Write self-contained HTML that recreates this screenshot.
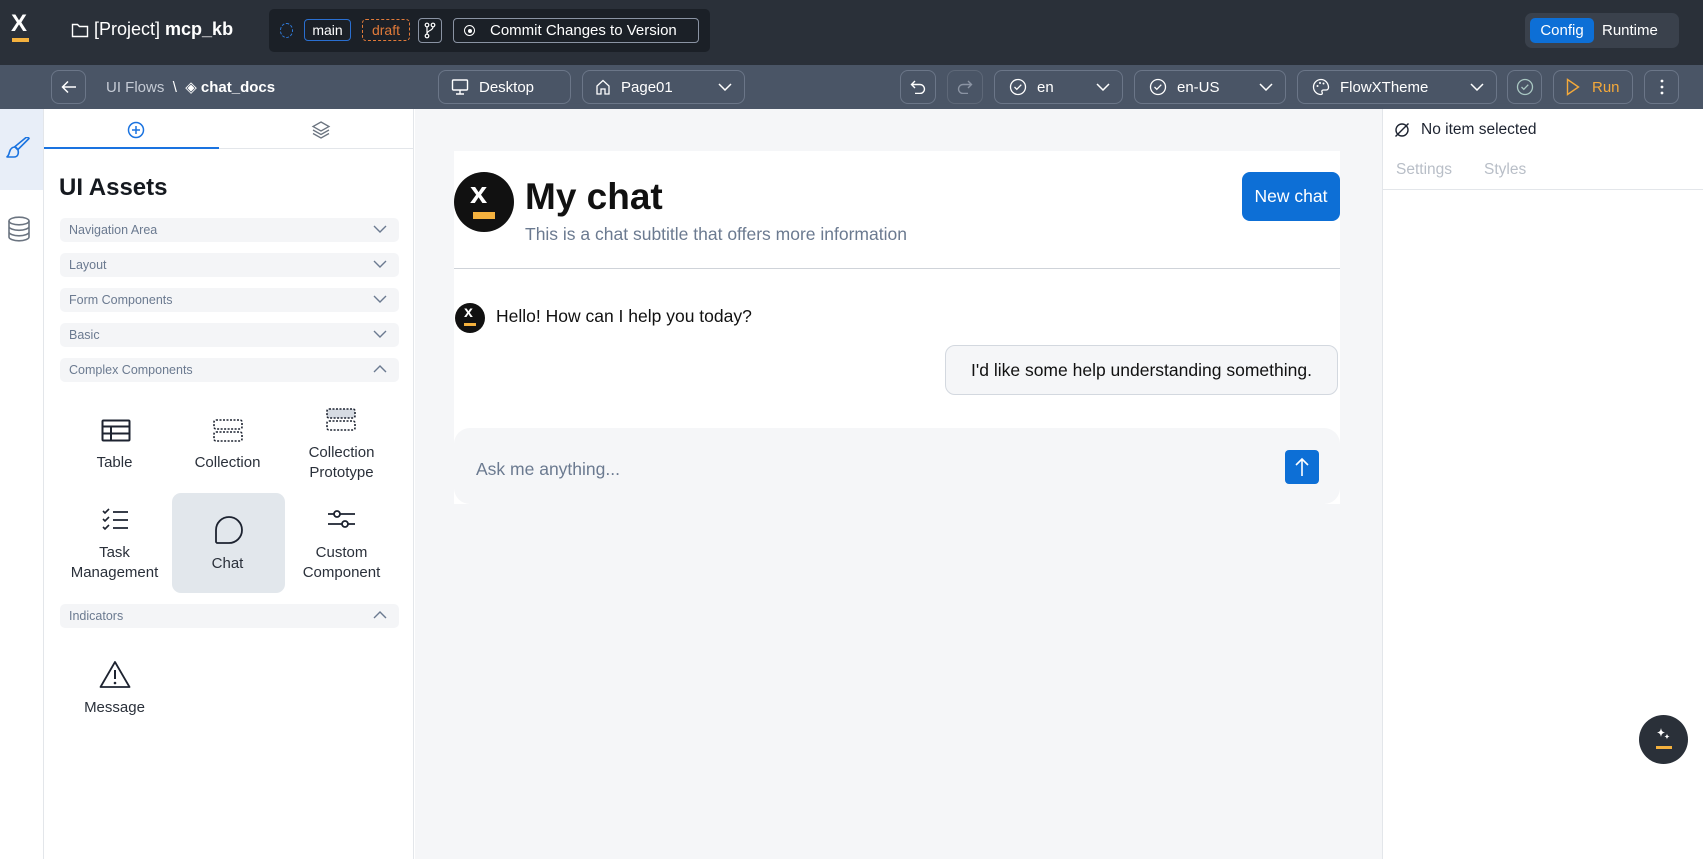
<!DOCTYPE html>
<html><head><meta charset="utf-8"><style>
*{box-sizing:border-box;margin:0;padding:0}
body{width:1703px;height:859px;overflow:hidden;font-family:"Liberation Sans",sans-serif;background:#fff;position:relative;color:#1d2330}
.a{position:absolute}
.top{left:0;top:0;width:1703px;height:65px;background:#2a3039}
.tb{left:0;top:65px;width:1703px;height:44px;background:#4a5566}
.btn{position:absolute;top:70px;height:34px;border:1px solid #6b7688;border-radius:8px;color:#fff;font-size:15px;display:flex;align-items:center;padding:0 12px;gap:10px}
.btn svg{flex:none}
.acc{position:absolute;left:60px;width:339px;height:24px;background:#f4f5f7;border-radius:5px;font-size:12.5px;color:#6b7a90;padding-left:9px;line-height:24px}
.acc svg{position:absolute;right:12px;top:7px}
.it{position:absolute;width:113px;text-align:center;font-size:15px;color:#2a303a;line-height:20px}
</style></head><body>
<div class="a top"></div>
<div class="a" style="left:11px;top:12px;font-weight:bold;color:#fff;font-size:24px;font-family:'Liberation Sans';line-height:24px">X</div>
<div class="a" style="left:12px;top:38px;width:17px;height:4px;background:#f4b13e"></div>
<svg class="a" style="left:71px;top:22px" width="18" height="16" viewBox="0 0 18 16"><path d="M1.5 2.5h5l2 2h8v10h-15z" fill="none" stroke="#fff" stroke-width="1.4"/></svg>
<div class="a" style="left:94px;top:19px;color:#fff;font-size:18px">[Project] <b>mcp_kb</b></div>
<div class="a" style="left:269px;top:9px;width:441px;height:43px;background:#1b2027;border-radius:5px"></div>
<div class="a" style="left:280px;top:23px;width:13px;height:15px;border:1.5px dashed #2f7de0;border-radius:50%"></div>
<div class="a" style="left:304px;top:19px;width:47px;height:22px;border:1px solid #2a6fd0;border-radius:4px;color:#fff;font-size:14px;text-align:center;line-height:20px">main</div>
<div class="a" style="left:362px;top:19px;width:48px;height:22px;border:1px dashed #e07a3a;border-radius:4px;color:#e07a3a;font-size:14px;text-align:center;line-height:20px">draft</div>
<div class="a" style="left:418px;top:18px;width:24px;height:25px;border:1px solid #8a93a3;border-radius:4px"></div>
<svg class="a" style="left:423px;top:22px" width="14" height="17" viewBox="0 0 14 17"><circle cx="4" cy="3" r="1.8" fill="none" stroke="#fff" stroke-width="1.2"/><circle cx="10" cy="3" r="1.8" fill="none" stroke="#fff" stroke-width="1.2"/><circle cx="4" cy="14" r="1.8" fill="none" stroke="#fff" stroke-width="1.2"/><path d="M4 5v7M10 5c0 4-6 3-6 7" fill="none" stroke="#fff" stroke-width="1.2"/></svg>
<div class="a" style="left:453px;top:18px;width:246px;height:25px;border:1px solid #8a93a3;border-radius:4px;color:#fff;font-size:15px;line-height:23px;padding-left:36px">Commit Changes to Version</div>
<div class="a" style="left:464px;top:25px;width:11px;height:11px;border:1.5px solid #fff;border-radius:50%"></div>
<div class="a" style="left:467.5px;top:28.5px;width:4px;height:4px;background:#fff;border-radius:50%"></div>
<div class="a" style="left:1525px;top:13px;width:154px;height:35px;background:#3a414c;border-radius:7px"></div>
<div class="a" style="left:1530px;top:18px;width:64px;height:25px;background:#0d6fd6;border-radius:5px;color:#fff;font-size:15px;text-align:center;line-height:25px">Config</div>
<div class="a" style="left:1602px;top:18px;color:#fff;font-size:15px;line-height:25px">Runtime</div>

<div class="a tb"></div>
<div class="btn" style="left:51px;width:35px;padding:0;justify-content:center"><svg width="16" height="14" viewBox="0 0 16 14"><path d="M15 7H2M7 1.5 1.5 7 7 12.5" fill="none" stroke="#fff" stroke-width="1.5"/></svg></div>
<div class="a" style="left:106px;top:78px;color:#c5cbd5;font-size:15px">UI Flows &nbsp;<span style="color:#fff">\</span> &nbsp;<span style="color:#fff">◈</span> <b style="color:#fff">chat_docs</b></div>
<div class="btn" style="left:438px;width:133px"><svg width="18" height="16" viewBox="0 0 18 16"><rect x="1.5" y="1" width="15" height="10" rx="1" fill="none" stroke="#fff" stroke-width="1.4"/><path d="M9 11v4M5 15h8" stroke="#fff" stroke-width="1.4"/></svg>Desktop</div>
<div class="btn" style="left:582px;width:163px"><svg width="16" height="16" viewBox="0 0 16 16"><path d="M2 7 8 1.5 14 7v8H10V10H6v5H2z" fill="none" stroke="#fff" stroke-width="1.3"/></svg>Page01<svg style="margin-left:auto" width="14" height="8" viewBox="0 0 14 8"><path d="M1 1l6 6 6-6" fill="none" stroke="#fff" stroke-width="1.5"/></svg></div>
<div class="btn" style="left:900px;width:36px;padding:0;justify-content:center"><svg width="16" height="14" viewBox="0 0 16 14"><path d="M5 1 1.5 4.5 5 8M1.5 4.5H10a4.5 4.5 0 010 9H5" fill="none" stroke="#fff" stroke-width="1.4"/></svg></div>
<div class="btn" style="left:947px;width:36px;padding:0;justify-content:center;border-color:#5e6878"><svg width="16" height="14" viewBox="0 0 16 14"><path d="M11 1l3.5 3.5L11 8M14.5 4.5H6a4.5 4.5 0 000 9h5" fill="none" stroke="#8b94a3" stroke-width="1.4"/></svg></div>
<div class="btn" style="left:994px;width:129px;padding-left:14px"><svg width="18" height="18" viewBox="0 0 18 18"><circle cx="9" cy="9" r="7.5" fill="none" stroke="#fff" stroke-width="1.3"/><path d="M5.5 9l2.3 2.3 4.5-4.6" fill="none" stroke="#fff" stroke-width="1.3"/></svg>en<svg style="margin-left:auto" width="14" height="8" viewBox="0 0 14 8"><path d="M1 1l6 6 6-6" fill="none" stroke="#fff" stroke-width="1.5"/></svg></div>
<div class="btn" style="left:1134px;width:152px;padding-left:14px"><svg width="18" height="18" viewBox="0 0 18 18"><circle cx="9" cy="9" r="7.5" fill="none" stroke="#fff" stroke-width="1.3"/><path d="M5.5 9l2.3 2.3 4.5-4.6" fill="none" stroke="#fff" stroke-width="1.3"/></svg>en-US<svg style="margin-left:auto" width="14" height="8" viewBox="0 0 14 8"><path d="M1 1l6 6 6-6" fill="none" stroke="#fff" stroke-width="1.5"/></svg></div>
<div class="btn" style="left:1297px;width:200px;padding-left:14px"><svg width="18" height="18" viewBox="0 0 18 18"><path d="M9 1.5a7.5 7.5 0 100 15c1.5 0 1.5-1.5 1-2.5s0-2 1.5-2H14a2.5 2.5 0 002.5-2.5C16.5 5 13 1.5 9 1.5z" fill="none" stroke="#fff" stroke-width="1.3"/><circle cx="5.5" cy="8" r="1" fill="#fff"/><circle cx="8" cy="5" r="1" fill="#fff"/><circle cx="11.5" cy="5.5" r="1" fill="#fff"/></svg>FlowXTheme<svg style="margin-left:auto" width="14" height="8" viewBox="0 0 14 8"><path d="M1 1l6 6 6-6" fill="none" stroke="#fff" stroke-width="1.5"/></svg></div>
<div class="btn" style="left:1507px;width:35px;padding:0;justify-content:center"><svg width="18" height="18" viewBox="0 0 18 18"><circle cx="9" cy="9" r="7.5" fill="none" stroke="#a9c7c2" stroke-width="1.3"/><path d="M5.5 9l2.3 2.3 4.5-4.6" fill="none" stroke="#a9c7c2" stroke-width="1.3"/></svg></div>
<div class="btn" style="left:1553px;width:80px;color:#f4a93a;font-weight:bold;gap:12px"><svg width="14" height="18" viewBox="0 0 14 18"><path d="M1.5 1.5 12.5 9 1.5 16.5z" fill="none" stroke="#f4a93a" stroke-width="1.4"/></svg><span style="font-weight:normal">Run</span></div>
<div class="btn" style="left:1644px;width:35px;padding:0;justify-content:center"><svg width="4" height="16" viewBox="0 0 4 16"><circle cx="2" cy="2" r="1.4" fill="#fff"/><circle cx="2" cy="8" r="1.4" fill="#fff"/><circle cx="2" cy="14" r="1.4" fill="#fff"/></svg></div>

<div class="a" style="left:0;top:109px;width:44px;height:750px;background:#fff;border-right:1px solid #e3e6ea"></div>
<div class="a" style="left:0;top:109px;width:43px;height:81px;background:#e8eef8"></div>
<svg class="a" style="left:5px;top:137px" width="26" height="22" viewBox="0 0 26 22"><path d="M24 1.5 13 12.5l-3-3L21 .5c1.5-.6 3 .5 3 1z" fill="none" stroke="#1a73e0" stroke-width="1.6"/><path d="M10 10c-4 0-5 3-5.5 5S3 19.5 1.5 20H9c3.5 0 5-3 4-7z" fill="none" stroke="#1a73e0" stroke-width="1.6"/></svg>
<svg class="a" style="left:7px;top:216px" width="24" height="26" viewBox="0 0 24 26"><ellipse cx="12" cy="5" rx="10" ry="3.8" fill="none" stroke="#6b7480" stroke-width="1.6"/><path d="M2 5v16c0 2 4.5 3.8 10 3.8S22 23 22 21V5M2 10.5c0 2 4.5 3.8 10 3.8S22 12.5 22 10.5M2 16c0 2 4.5 3.8 10 3.8S22 18 22 16" fill="none" stroke="#6b7480" stroke-width="1.6"/></svg>

<div class="a" style="left:44px;top:109px;width:370px;height:750px;background:#fff;border-right:1px solid #e3e6ea"></div>
<div class="a" style="left:44px;top:148px;width:370px;height:1px;background:#e3e6ea"></div>
<div class="a" style="left:44px;top:147px;width:175px;height:2px;background:#1a73e0"></div>
<svg class="a" style="left:127px;top:121px" width="18" height="18" viewBox="0 0 18 18"><circle cx="9" cy="9" r="7.5" fill="none" stroke="#1a73e0" stroke-width="1.5"/><path d="M9 5v8M5 9h8" stroke="#1a73e0" stroke-width="1.5"/></svg>
<svg class="a" style="left:311px;top:120px" width="20" height="20" viewBox="0 0 20 20"><path d="M10 2 18 6.5 10 11 2 6.5z" fill="none" stroke="#6b7480" stroke-width="1.3"/><path d="M2 10l8 4.5 8-4.5M2 13.5 10 18l8-4.5" fill="none" stroke="#6b7480" stroke-width="1.3"/></svg>
<div class="a" style="left:59px;top:174px;font-size:24px;font-weight:bold;color:#15191f">UI Assets</div>
<div class="acc" style="top:218px">Navigation Area<svg width="14" height="8" viewBox="0 0 14 8"><path d="M1 1l6 6 6-6" fill="none" stroke="#6b7a90" stroke-width="1.4"/></svg></div>
<div class="acc" style="top:253px">Layout<svg width="14" height="8" viewBox="0 0 14 8"><path d="M1 1l6 6 6-6" fill="none" stroke="#6b7a90" stroke-width="1.4"/></svg></div>
<div class="acc" style="top:288px">Form Components<svg width="14" height="8" viewBox="0 0 14 8"><path d="M1 1l6 6 6-6" fill="none" stroke="#6b7a90" stroke-width="1.4"/></svg></div>
<div class="acc" style="top:323px">Basic<svg width="14" height="8" viewBox="0 0 14 8"><path d="M1 1l6 6 6-6" fill="none" stroke="#6b7a90" stroke-width="1.4"/></svg></div>
<div class="acc" style="top:358px">Complex Components<svg width="14" height="8" viewBox="0 0 14 8"><path d="M1 7l6-6 6 6" fill="none" stroke="#6b7a90" stroke-width="1.4"/></svg></div>
<div class="acc" style="top:604px">Indicators<svg width="14" height="8" viewBox="0 0 14 8"><path d="M1 7l6-6 6 6" fill="none" stroke="#6b7a90" stroke-width="1.4"/></svg></div>

<svg class="a" style="left:101px;top:419px" width="30" height="24" viewBox="0 0 30 24"><rect x="1.5" y="1.5" width="27" height="20" rx="1" fill="none" stroke="#1d2330" stroke-width="2"/><path d="M1.5 7.5h27M1.5 14.5h27M10 7.5v14" stroke="#1d2330" stroke-width="2"/></svg>
<div class="it" style="left:58px;top:453px">Table</div>
<svg class="a" style="left:213px;top:419px" width="30" height="24" viewBox="0 0 30 24"><rect x="1" y="1" width="28" height="9" rx="2" fill="none" stroke="#1d2330" stroke-width="1.6" stroke-dasharray="2 1.5"/><rect x="1" y="13" width="28" height="9" rx="2" fill="none" stroke="#1d2330" stroke-width="1.6" stroke-dasharray="2 1.5"/></svg>
<div class="it" style="left:171px;top:453px">Collection</div>
<svg class="a" style="left:326px;top:408px" width="30" height="24" viewBox="0 0 30 24"><rect x="1" y="1" width="28" height="9" rx="2" fill="#d6dbe2" stroke="#1d2330" stroke-width="1.6" stroke-dasharray="2 1.5"/><rect x="1" y="13" width="28" height="9" rx="2" fill="none" stroke="#1d2330" stroke-width="1.6" stroke-dasharray="2 1.5"/></svg>
<div class="it" style="left:285px;top:443px">Collection<br>Prototype</div>

<div class="a" style="left:172px;top:493px;width:113px;height:100px;background:#e2e7ec;border-radius:9px"></div>
<svg class="a" style="left:101px;top:508px" width="28" height="24" viewBox="0 0 28 24"><path d="M2 3l2 2 4-4M2 11l2 2 4-4M2 19l2 2 4-4" fill="none" stroke="#1d2330" stroke-width="1.6"/><path d="M12 4h15M12 12h15M12 20h15" stroke="#1d2330" stroke-width="1.8"/></svg>
<div class="it" style="left:58px;top:543px">Task<br>Management</div>
<svg class="a" style="left:214px;top:515px" width="30" height="30" viewBox="0 0 30 30"><path d="M2 27V15A13 13 0 1115 28H3z" fill="none" stroke="#1d2330" stroke-width="1.8" stroke-linejoin="round"/></svg>
<div class="it" style="left:171px;top:554px">Chat</div>
<svg class="a" style="left:327px;top:509px" width="28" height="20" viewBox="0 0 28 20"><path d="M1 5h27M1 15h27" stroke="#1d2330" stroke-width="1.8"/><circle cx="10" cy="5" r="3" fill="#fff" stroke="#1d2330" stroke-width="1.8"/><circle cx="18" cy="15" r="3" fill="#fff" stroke="#1d2330" stroke-width="1.8"/></svg>
<div class="it" style="left:285px;top:543px">Custom<br>Component</div>

<svg class="a" style="left:99px;top:660px" width="32" height="29" viewBox="0 0 32 29"><path d="M16 2 30.5 27H1.5z" fill="none" stroke="#1d2330" stroke-width="1.8" stroke-linejoin="round"/><path d="M16 10v9" stroke="#1d2330" stroke-width="2"/><circle cx="16" cy="23" r="1.3" fill="#1d2330"/></svg>
<div class="it" style="left:58px;top:698px">Message</div>

<div class="a" style="left:415px;top:109px;width:967px;height:750px;background:#f5f6f8"></div>
<div class="a" style="left:454px;top:151px;width:886px;height:353px;background:#fff"></div>
<div class="a" style="left:454px;top:172px;width:60px;height:60px;background:#111;border-radius:50%"></div>
<div class="a" style="left:470px;top:178px;color:#fff;font-weight:bold;font-size:31px;line-height:30px">x</div>
<div class="a" style="left:473px;top:212px;width:22px;height:7px;background:#f4b13e"></div>
<div class="a" style="left:525px;top:175px;font-size:37px;font-weight:bold;color:#111;line-height:44px">My chat</div>
<div class="a" style="left:525px;top:224px;font-size:17.5px;color:#6b7a90">This is a chat subtitle that offers more information</div>
<div class="a" style="left:1242px;top:172px;width:98px;height:49px;background:#0d6fd6;border-radius:8px;color:#fff;font-size:17.5px;text-align:center;line-height:49px">New chat</div>
<div class="a" style="left:454px;top:268px;width:886px;height:1px;background:#cfd3d9"></div>
<div class="a" style="left:455px;top:303px;width:30px;height:30px;background:#111;border-radius:50%"></div>
<div class="a" style="left:464px;top:305px;color:#fff;font-weight:bold;font-size:16px;line-height:16px">x</div>
<div class="a" style="left:464px;top:323px;width:12px;height:3px;background:#f4b13e"></div>
<div class="a" style="left:496px;top:306px;font-size:17.5px;color:#111">Hello! How can I help you today?</div>
<div class="a" style="left:945px;top:345px;width:393px;height:50px;background:#f5f6f8;border:1px solid #d3d8df;border-radius:10px;font-size:17.5px;color:#111;line-height:48px;text-align:center">I'd like some help understanding something.</div>
<div class="a" style="left:454px;top:428px;width:886px;height:76px;background:#f5f6f8;border-radius:16px"></div>
<div class="a" style="left:476px;top:459px;font-size:17.5px;color:#6b7a90">Ask me anything...</div>
<div class="a" style="left:1285px;top:450px;width:34px;height:34px;background:#0d6fd6;border-radius:4px"></div>
<svg class="a" style="left:1294px;top:457px" width="16" height="20" viewBox="0 0 16 20"><path d="M8 19V2M2 8l6-6 6 6" fill="none" stroke="#fff" stroke-width="1.6"/></svg>

<div class="a" style="left:1382px;top:109px;width:321px;height:750px;background:#fff;border-left:1px solid #e3e6ea"></div>
<svg class="a" style="left:1394px;top:122px" width="16" height="16" viewBox="0 0 16 16"><circle cx="8" cy="8" r="6" fill="none" stroke="#1d2330" stroke-width="1.4"/><path d="M14.5 1.5 1.5 14.5" stroke="#1d2330" stroke-width="1.4"/></svg>
<div class="a" style="left:1421px;top:121px;font-size:15.5px;color:#1d2330">No item selected</div>
<div class="a" style="left:1396px;top:161px;font-size:15.5px;color:#b8bec7">Settings</div>
<div class="a" style="left:1484px;top:161px;font-size:15.5px;color:#b8bec7">Styles</div>
<div class="a" style="left:1382px;top:189px;width:321px;height:1px;background:#e3e6ea"></div>
<div class="a" style="left:1639px;top:715px;width:49px;height:49px;background:#2a3039;border-radius:50%"></div>
<svg class="a" style="left:1652px;top:727px" width="22" height="18" viewBox="0 0 22 18"><path d="M9 1c.5 3 1.5 4 4 4.5-2.5.5-3.5 1.5-4 4.5-.5-3-1.5-4-4-4.5 2.5-.5 3.5-1.5 4-4.5zM15 6.5c.3 2 1 2.7 2.7 3-1.7.3-2.4 1-2.7 3-.3-2-1-2.7-2.7-3 1.7-.3 2.4-1 2.7-3z" fill="#fff"/></svg>
<div class="a" style="left:1656px;top:746px;width:16px;height:3px;background:#f4b13e"></div>
</body></html>
